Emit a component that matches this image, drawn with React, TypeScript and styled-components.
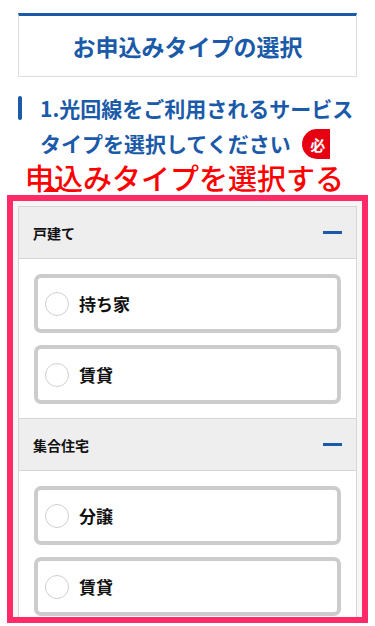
import React from "react";
import styled, { createGlobalStyle } from "styled-components";

const Global = createGlobalStyle`
  html, body { margin: 0; padding: 0; background: #ffffff; overflow: hidden; }
  body { font-family: "Noto Sans CJK JP", "Noto Sans", sans-serif; }
  * { box-sizing: border-box; }
`;

const BLUE = "#1b5aa8";

const Page = styled.div`
  width: 375px;
  height: 626px;
  padding: 13px 18px 0;
  overflow: hidden;
`;

const TitleBox = styled.div`
  height: 64px;
  border: 1px solid #dcdcdc;
  border-top: 3px solid ${BLUE};
  display: flex;
  align-items: center;
  justify-content: center;
  background: #fff;
`;

const Title = styled.h1`
  margin: 0;
  font-size: 23px;
  font-weight: 700;
  color: ${BLUE};
`;

const Heading = styled.div`
  margin-top: 14px;
  display: flex;
  gap: 18px;
`;

const Bar = styled.span`
  flex: none;
  width: 4px;
  height: 24px;
  margin-top: 5px;
  border-radius: 2px;
  background: ${BLUE};
`;

const HeadingText = styled.h2`
  margin: 0;
  font-size: 21px;
  line-height: 35px;
  font-weight: 700;
  color: ${BLUE};
`;

const Badge = styled.span`
  display: inline-flex;
  align-items: center;
  justify-content: center;
  vertical-align: middle;
  margin-left: 11px;
  margin-top: -4px;
  width: 28px;
  height: 30px;
  padding-left: 4px;
  border-radius: 15px 0 0 15px;
  background: #e60012;
  color: #fff;
  font-size: 15px;
  line-height: 1;
`;

const Annotation = styled.div`
  position: relative;
  margin: 0 -11px 2px;
  padding-left: 18px;
  font-size: 29px;
  line-height: 32px;
  font-weight: 500;
  color: #ff0000;
  white-space: nowrap;
  text-shadow: 0 0 2px #fff, 0 0 2px #fff, 1px 1px 1px #fff, -1px -1px 1px #fff;
`;

const Tail = styled.svg`
  position: absolute;
  left: 34px;
  top: 22px;
`;

const Frame = styled.div`
  margin: 0 -11px;
  height: 428px;
  border: 6px solid #ff2a68;
  padding: 5px 5px 0;
  background: #f6f6f6;
  overflow: hidden;
`;

const Accordion = styled.div`
  border: 1px solid #d6d6d6;
  border-bottom: none;
  background: #fff;
`;

const Header = styled.div`
  height: 52px;
  display: flex;
  align-items: center;
  justify-content: space-between;
  padding: 0 14px;
  background: #eeeeee;
  border-bottom: 1px solid #d6d6d6;
`;

const HeaderTitle = styled.span`
  font-size: 14px;
  font-weight: 700;
  color: #111;
`;

const Minus = styled.span`
  width: 19px;
  height: 3px;
  background: ${BLUE};
`;

const Body = styled.div`
  display: flex;
  flex-direction: column;
  gap: 12px;
  padding: 15px 15px 14px;
  border-bottom: 1px solid #d6d6d6;
`;

const Option = styled.label`
  height: 59px;
  display: flex;
  align-items: center;
  gap: 10px;
  padding-left: 7px;
  border: 4px solid #cccccc;
  border-radius: 7px;
  background: #fff;
`;

const Radio = styled.span`
  width: 24px;
  height: 24px;
  border-radius: 50%;
  border: 1px solid #cfcfcf;
  background: #fff;
`;

const OptionLabel = styled.span`
  font-size: 17px;
  font-weight: 700;
  color: #111;
`;

const groups = [
  { title: "戸建て", options: ["持ち家", "賃貸"] },
  { title: "集合住宅", options: ["分譲", "賃貸"] },
];

export default function App() {
  return (
    <Page>
      <Global />
      <TitleBox>
        <Title>お申込みタイプの選択</Title>
      </TitleBox>
      <Heading>
        <Bar />
        <HeadingText>
          1.光回線をご利用されるサービスタイプを選択してください
          <Badge>必</Badge>
        </HeadingText>
      </Heading>
      <Annotation>
        申込みタイプを選択する
        <Tail width="20" height="10" viewBox="0 0 20 10">
          <path d="M2 9 L9 2 L18 9 Z" fill="#ff0000" />
        </Tail>
      </Annotation>
      <Frame>
        <Accordion>
          {groups.map((g) => (
            <React.Fragment key={g.title}>
              <Header>
                <HeaderTitle>{g.title}</HeaderTitle>
                <Minus />
              </Header>
              <Body>
                {g.options.map((o, i) => (
                  <Option key={i}>
                    <Radio />
                    <OptionLabel>{o}</OptionLabel>
                  </Option>
                ))}
              </Body>
            </React.Fragment>
          ))}
        </Accordion>
      </Frame>
    </Page>
  );
}
